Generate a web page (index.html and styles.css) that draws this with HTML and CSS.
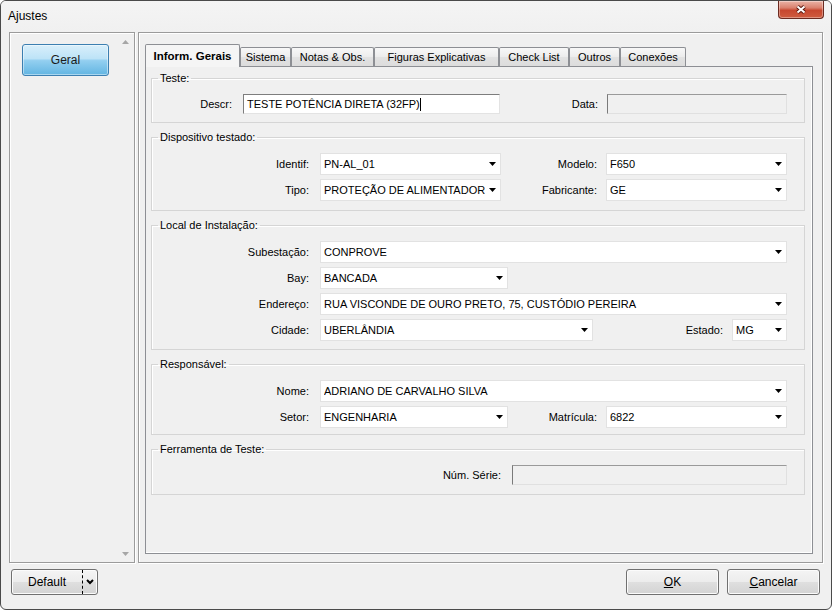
FILE: index.html
```html
<!DOCTYPE html>
<html lang="pt">
<head>
<meta charset="utf-8">
<title>Ajustes</title>
<link rel="stylesheet" href="styles.css">
</head>
<body>
<div class="window">
  <div class="titlebar">
    <span class="title">Ajustes</span>
    <div class="close">
      <svg width="14" height="11" viewBox="0 0 14 11"><path d="M3.5 2.5l7 6M10.5 2.5l-7 6" stroke="#5e1c12" stroke-width="4" fill="none"/><path d="M3.5 2.5l7 6M10.5 2.5l-7 6" stroke="#fff" stroke-width="2" fill="none"/></svg>
    </div>
  </div>

  <div class="main">
    <div class="side">
      <div class="side-list">
        <div class="nav-btn">Geral</div>
      </div>
      <div class="vscroll">
        <svg width="7" height="4" viewBox="0 0 7 4"><path d="M0 4h7L3.5 0z" fill="#a6a6a6"/></svg>
        <svg width="7" height="4" viewBox="0 0 7 4"><path d="M0 0h7L3.5 4z" fill="#a6a6a6"/></svg>
      </div>
    </div>

    <div class="content">
      <div class="tabs">
        <div class="tab active t-gerais">Inform. Gerais</div>
        <div class="tab t-sistema">Sistema</div>
        <div class="tab t-notas">Notas &amp; Obs.</div>
        <div class="tab t-figuras">Figuras Explicativas</div>
        <div class="tab t-check">Check List</div>
        <div class="tab t-outros">Outros</div>
        <div class="tab t-conexoes">Conexões</div>
      </div>
      <div class="page">
        <fieldset class="group g-teste">
          <legend>Teste:</legend>
          <div class="rows">
            <div class="row">
              <span class="lab w-91">Descr:</span>
              <div class="edit w-257">TESTE POTÊNCIA DIRETA (32FP)<span class="caret"></span></div>
              <span class="lab2">Data:</span>
              <div class="edit disabled w-180"></div>
            </div>
          </div>
        </fieldset>

        <fieldset class="group g-disp">
          <legend>Dispositivo testado:</legend>
          <div class="rows">
            <div class="row">
              <span class="lab w-168">Identif:</span>
              <div class="combo w-181"><span class="val">PN-AL_01</span><svg class="dd" width="7" height="4" viewBox="0 0 7 4"><path d="M0 0h7L3.5 4z"/></svg></div>
              <span class="lab2">Modelo:</span>
              <div class="combo w-181"><span class="val">F650</span><svg class="dd" width="7" height="4" viewBox="0 0 7 4"><path d="M0 0h7L3.5 4z"/></svg></div>
            </div>
            <div class="row">
              <span class="lab w-168">Tipo:</span>
              <div class="combo w-181"><span class="val">PROTEÇÃO DE ALIMENTADOR</span><svg class="dd" width="7" height="4" viewBox="0 0 7 4"><path d="M0 0h7L3.5 4z"/></svg></div>
              <span class="lab2">Fabricante:</span>
              <div class="combo w-181"><span class="val">GE</span><svg class="dd" width="7" height="4" viewBox="0 0 7 4"><path d="M0 0h7L3.5 4z"/></svg></div>
            </div>
          </div>
        </fieldset>

        <fieldset class="group g-local">
          <legend>Local de Instalação:</legend>
          <div class="rows">
            <div class="row">
              <span class="lab w-168">Subestação:</span>
              <div class="combo grow"><span class="val">CONPROVE</span><svg class="dd" width="7" height="4" viewBox="0 0 7 4"><path d="M0 0h7L3.5 4z"/></svg></div>
            </div>
            <div class="row">
              <span class="lab w-168">Bay:</span>
              <div class="combo w-188"><span class="val">BANCADA</span><svg class="dd" width="7" height="4" viewBox="0 0 7 4"><path d="M0 0h7L3.5 4z"/></svg></div>
            </div>
            <div class="row">
              <span class="lab w-168">Endereço:</span>
              <div class="combo grow"><span class="val">RUA VISCONDE DE OURO PRETO, 75, CUSTÓDIO PEREIRA</span><svg class="dd" width="7" height="4" viewBox="0 0 7 4"><path d="M0 0h7L3.5 4z"/></svg></div>
            </div>
            <div class="row">
              <span class="lab w-168">Cidade:</span>
              <div class="combo w-273"><span class="val">UBERLÂNDIA</span><svg class="dd" width="7" height="4" viewBox="0 0 7 4"><path d="M0 0h7L3.5 4z"/></svg></div>
              <span class="lab2">Estado:</span>
              <div class="combo w-55"><span class="val">MG</span><svg class="dd" width="7" height="4" viewBox="0 0 7 4"><path d="M0 0h7L3.5 4z"/></svg></div>
            </div>
          </div>
        </fieldset>

        <fieldset class="group g-resp">
          <legend>Responsável:</legend>
          <div class="rows">
            <div class="row">
              <span class="lab w-168">Nome:</span>
              <div class="combo grow"><span class="val">ADRIANO DE CARVALHO SILVA</span><svg class="dd" width="7" height="4" viewBox="0 0 7 4"><path d="M0 0h7L3.5 4z"/></svg></div>
            </div>
            <div class="row">
              <span class="lab w-168">Setor:</span>
              <div class="combo w-188"><span class="val">ENGENHARIA</span><svg class="dd" width="7" height="4" viewBox="0 0 7 4"><path d="M0 0h7L3.5 4z"/></svg></div>
              <span class="lab2">Matrícula:</span>
              <div class="combo w-181"><span class="val">6822</span><svg class="dd" width="7" height="4" viewBox="0 0 7 4"><path d="M0 0h7L3.5 4z"/></svg></div>
            </div>
          </div>
        </fieldset>

        <fieldset class="group g-ferr">
          <legend>Ferramenta de Teste:</legend>
          <div class="rows">
            <div class="row">
              <span class="lab w-360">Núm. Série:</span>
              <div class="edit disabled grow"></div>
            </div>
          </div>
        </fieldset>
      </div>
    </div>
  </div>

  <div class="footer">
    <div class="btn split">
      <span class="split-main">Default</span>
      <span class="split-arrow"><svg width="8" height="6" viewBox="0 0 8 6"><path d="M1 1l3 3 3-3" stroke="#000" stroke-width="2" fill="none"/></svg></span>
    </div>
    <div class="actions">
      <div class="btn w-93"><u>O</u>K</div>
      <div class="btn w-93"><u>C</u>ancelar</div>
    </div>
  </div>
</div>
</body>
</html>
```

FILE: styles.css
```css
* { box-sizing: border-box; }
html, body { margin: 0; padding: 0; }
body {
  width: 832px;
  height: 610px;
  overflow: hidden;
  background: #ffffff;
  font-family: "Liberation Sans", Arial, sans-serif;
  font-size: 11px;
  color: #000;
}

.window {
  width: 832px;
  height: 610px;
  border: 1px solid #4a4a4a;
  border-radius: 6px;
  background: #f0f0f0;
  display: flex;
  flex-direction: column;
  overflow: hidden;
}

/* title bar */
.titlebar {
  height: 31px;
  flex: none;
  display: flex;
  align-items: flex-start;
  background: linear-gradient(#f4f4f4, #f0f0f0);
}
.title {
  font-size: 12px;
  line-height: 14px;
  padding-left: 7px;
  margin-top: 8px;
  color: #000;
}
.close {
  margin-left: auto;
  margin-right: 7px;
  width: 46px;
  height: 18px;
  border: 1px solid #6b2a20;
  border-top: none;
  border-radius: 0 0 4px 4px;
  background: linear-gradient(#eab3a6 0%, #d9816e 40%, #c7472f 55%, #cf5c3f 100%);
  box-shadow: inset 0 0 0 1px rgba(255, 255, 255, 0.35);
  display: flex;
  align-items: center;
  justify-content: center;
}

/* main area */
.main {
  height: 531px;
  flex: none;
  display: flex;
  gap: 3px;
  padding: 0 8px;
}
.side {
  width: 126px;
  flex: none;
  border: 1px solid #9b9b9b;
  box-shadow: inset 1px 1px 0 #fff, 1px 1px 0 #fff;
  display: flex;
}
.side-list {
  flex: 1;
  padding: 11px 0 0 12px;
}
.nav-btn {
  width: 87px;
  height: 32px;
  border: 1px solid #3c7fb1;
  border-radius: 3px;
  background: linear-gradient(#d9effb 0%, #bde3f7 45%, #93cff0 52%, #62b5e2 100%);
  box-shadow: inset 0 0 0 1px rgba(255, 255, 255, 0.45);
  display: flex;
  align-items: center;
  justify-content: center;
  font-size: 12px;
  color: #1a1a1a;
}
.vscroll {
  width: 17px;
  flex: none;
  display: flex;
  flex-direction: column;
  justify-content: space-between;
  align-items: center;
  padding: 7px 0 6px;
}
.vscroll svg { display: block; }

.content {
  flex: 1;
  border: 1px solid #9b9b9b;
  box-shadow: inset 1px 1px 0 #fff, 1px 1px 0 #fff;
  padding: 11px 9px 8px 6px;
  display: flex;
  flex-direction: column;
}

/* tabs */
.tabs {
  height: 22px;
  flex: none;
  display: flex;
  align-items: flex-end;
}
.tab {
  height: 19px;
  flex: none;
  border: 1px solid #8d8f94;
  border-bottom: none;
  border-radius: 2px 2px 0 0;
  background: linear-gradient(#f8f8f8, #ececec 50%, #e2e2e2 51%, #dcdcdc);
  text-align: center;
  line-height: 18px;
  font-size: 11px;
  white-space: nowrap;
}
.tab.active {
  height: 23px;
  margin-bottom: -1px;
  position: relative;
  z-index: 1;
  background: #f5f5f5;
  font-weight: bold;
  font-size: 11.5px;
  line-height: 22px;
}
.t-gerais { width: 95px; }
.t-sistema { width: 51px; }
.t-notas { width: 83px; }
.t-figuras { width: 125px; }
.t-check { width: 70px; }
.t-outros { width: 51px; }
.t-conexoes { width: 66px; }

.page {
  flex: 1;
  border: 1px solid #8d8f94;
  background: #f0f0f0;
  box-shadow: inset -1px -1px 0 #fff;
  padding: 5px 7px 0 5px;
  display: flex;
  flex-direction: column;
  gap: 8px;
}

/* group boxes */
.group {
  margin: 0;
  min-width: 0;
  border: 1px solid #d5d5d5;
  box-shadow: inset 1px 1px 0 #fff;
  padding: 9px 17px 8px 0;
}
.group legend {
  margin-left: 6px;
  padding: 0 2px;
  line-height: 13px;
  font-size: 11px;
}
.g-teste { padding-bottom: 8px; }
.g-disp { padding-bottom: 9px; }
.g-local { padding-bottom: 8px; }
.g-resp { padding-bottom: 6px; }
.g-ferr { padding-bottom: 9px; }

.rows {
  display: flex;
  flex-direction: column;
  gap: 4px;
}
.row {
  display: flex;
  align-items: center;
}
.lab {
  flex: none;
  text-align: right;
  padding-right: 11px;
  white-space: nowrap;
}
.lab2 {
  flex: 1;
  text-align: right;
  padding-right: 9px;
  white-space: nowrap;
}
.w-91 { width: 91px; }
.w-168 { width: 168px; }
.w-360 { width: 360px; }
.w-257 { width: 257px; }
.w-180 { width: 180px; }
.w-181 { width: 181px; }
.w-188 { width: 188px; }
.w-273 { width: 273px; }
.w-55 { width: 55px; }
.w-93 { width: 93px; }
.grow { flex: 1; }

.combo {
  flex: none;
  height: 22px;
  background: #fff;
  border: 1px solid #e2e2e2;
  display: flex;
  align-items: center;
  padding: 0 4px 0 3px;
}
.combo.grow { flex: 1; }
.combo .val {
  flex: 1;
  white-space: nowrap;
  overflow: hidden;
}
.combo .dd {
  flex: none;
  fill: #000;
  margin-left: 4px;
}

.edit {
  flex: none;
  height: 20px;
  background: #fff;
  border: 1px solid;
  border-color: #7d7d7d #e3e3e3 #e3e3e3 #7d7d7d;
  display: flex;
  align-items: center;
  padding: 0 3px;
  white-space: nowrap;
}
.edit.grow { flex: 1; }
.edit.disabled {
  background: #f0f0f0;
  border-color: #9a9a9a #e0e0e0 #e0e0e0 #7a7a7a;
}
.caret {
  display: inline-block;
  width: 1px;
  height: 13px;
  background: #000;
}

/* footer */
.footer {
  flex: 1;
  display: flex;
  justify-content: space-between;
  align-items: flex-start;
  padding: 6px 11px 0 10px;
}
.actions {
  display: flex;
  gap: 8px;
}
.btn {
  height: 26px;
  border: 1px solid #707070;
  border-radius: 3px;
  background: linear-gradient(#f4f4f4 0%, #ececec 50%, #dfdfdf 51%, #d3d3d3 100%);
  box-shadow: inset 0 0 0 1px #fbfbfb;
  display: flex;
  align-items: center;
  justify-content: center;
  font-size: 12px;
}
.split {
  width: 87px;
  justify-content: flex-start;
}
.split-main {
  width: 70px;
  text-align: center;
}
.split-arrow {
  flex: 1;
  height: 100%;
  border-left: 1px dashed #000;
  display: flex;
  align-items: center;
  justify-content: center;
}
```
